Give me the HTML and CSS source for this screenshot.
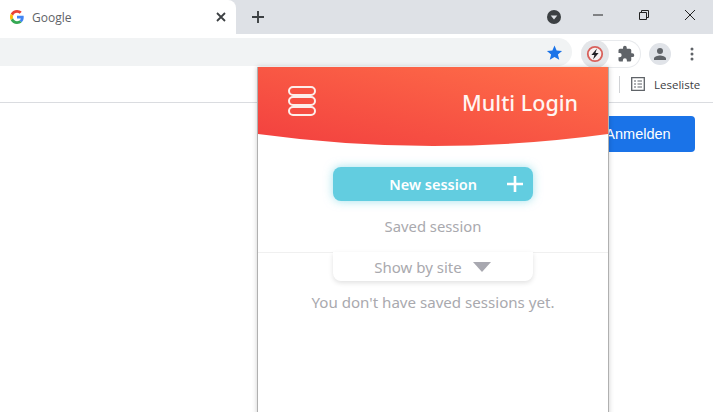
FILE: index.html
```html
<!DOCTYPE html>
<html lang="en">
<head>
  <meta charset="UTF-8">
  <meta name="viewport" content="width=device-width, initial-scale=1.0">
  <title>Multi Login</title>
  <link rel="stylesheet" href="styles.css">
</head>
<body>

  <div class="browser">
    <!-- Tab strip -->
    <div class="tabstrip">
      <div class="tab">
        <svg class="favicon" viewBox="0 0 48 48" width="14" height="14">
          <path fill="#ea4335" d="M24 9.5c3.5 0 6.700 1.200 9.200 3.600l6.900-6.900C35.900 2.400 30.500 0 24 0 14.600 0 6.500 5.400 2.600 13.200l8 6.200C12.500 13.700 17.800 9.500 24 9.500z"/>
          <path fill="#4285f4" d="M47 24.500c0-1.600-.1-3.100-.4-4.500H24v9h13c-.6 3-2.200 5.400-4.800 7.100l7.700 6c4.500-4.200 7.100-10.300 7.100-17.600z"/>
          <path fill="#fbbc05" d="M10.600 28.600c-.5-1.400-.8-3-.8-4.600s.3-3.200.8-4.600l-8-6.200C.9 16.500 0 20.100 0 24s.9 7.500 2.600 10.800l8-6.200z"/>
          <path fill="#34a853" d="M24 48c6.500 0 11.900-2.100 15.900-5.900l-7.700-6c-2.200 1.500-4.900 2.300-8.200 2.300-6.200 0-11.500-4.200-13.400-9.800l-8 6.200C6.500 42.600 14.600 48 24 48z"/>
        </svg>
        <span class="tab-title">Google</span>
        <svg class="tab-close" viewBox="0 0 10 10" width="10" height="10">
          <path d="M1 1l8 8M9 1L1 9" stroke="#3c4043" stroke-width="1.800" fill="none"/>
        </svg>
      </div>
      <svg class="new-tab" viewBox="0 0 12 12" width="12" height="12">
        <path d="M6 0v12M0 6h12" stroke="#3c4043" stroke-width="1.900" fill="none"/>
      </svg>
      <div class="window-controls">
        <svg class="profile-drop" viewBox="0 0 14 14" width="14" height="14">
          <circle cx="7" cy="7" r="7" fill="#3c4043"/>
          <path d="M3.700 5.400h6.600L7 9.600z" fill="#dee1e6"/>
        </svg>
        <div class="window-btn">
          <svg viewBox="0 0 10 10" width="10" height="10"><path d="M0 5h10" stroke="#222" fill="none"/></svg>
        </div>
        <div class="window-btn">
          <svg viewBox="0 0 10 10" width="10" height="10"><path d="M.5 2.500h7v7h-7zM2.500 2.500v-2h7v7h-2" stroke="#222" fill="none"/></svg>
        </div>
        <div class="window-btn">
          <svg viewBox="0 0 10 10" width="10" height="10"><path d="M0 0l10 10M10 0L0 10" stroke="#222" fill="none"/></svg>
        </div>
      </div>
    </div>

    <!-- Address bar -->
    <div class="toolbar">
      <div class="omnibox">
        <svg viewBox="0 0 24 24" width="17" height="17">
          <path fill="#1a73e8" d="M12 2l3 7.200 7.700.6-5.900 5 1.900 7.600L12 18.300l-6.700 4.100 1.900-7.600-5.900-5L9 9.200z"/>
        </svg>
      </div>
      <div class="extensions">
        <div class="ext-active">
          <svg viewBox="0 0 18 18" width="18" height="18">
            <circle cx="9" cy="9" r="7.200" fill="#f6f1f0" stroke="#d9605a" stroke-width="1.800"/>
            <path d="M10.900 3.500L5.400 10h3l-1.300 4.500L12.600 8H9.500z" fill="#202124"/>
          </svg>
        </div>
        <svg class="puzzle" viewBox="0 0 24 24" width="18" height="18">
          <path fill="#5f6368" d="M20.500 11H19V7a2 2 0 0 0-2-2h-4V3.500a2.500 2.500 0 0 0-5 0V5H4a2 2 0 0 0-2 2v3.800h1.500a2.700 2.700 0 0 1 0 5.400H2V20a2 2 0 0 0 2 2h3.800v-1.500a2.700 2.700 0 0 1 5.400 0V22H17a2 2 0 0 0 2-2v-4h1.500a2.500 2.500 0 0 0 0-5z"/>
        </svg>
      </div>
      <div class="avatar">
        <svg viewBox="0 0 24 24" width="18" height="18">
          <path fill="#5f6368" d="M12 12a4 4 0 1 0 0-8 4 4 0 0 0 0 8zm0 2c-2.700 0-8 1.300-8 4v2h16v-2c0-2.700-5.300-4-8-4z"/>
        </svg>
      </div>
      <svg class="kebab" viewBox="0 0 4 14" width="4" height="14">
        <circle cx="2" cy="2" r="1.500" fill="#5f6368"/>
        <circle cx="2" cy="7" r="1.500" fill="#5f6368"/>
        <circle cx="2" cy="12" r="1.500" fill="#5f6368"/>
      </svg>
    </div>

    <!-- Bookmarks -->
    <div class="bookmarks">
      <span class="bookmarks-sep"></span>
      <svg viewBox="0 0 14 14" width="14" height="14">
        <path d="M.7.700h12.600v12.600H.7z" stroke="#5f6368" stroke-width="1.300" fill="none"/>
        <path d="M3 4h2M3 7h2M3 10h2M6.500 4H11M6.500 7H11M6.500 10H11" stroke="#5f6368" stroke-width="1.200" fill="none"/>
      </svg>
      <span class="bookmarks-label">Leseliste</span>
    </div>

    <div class="content">
      <button class="signin-btn">Anmelden</button>
    </div>

    <!-- Extension popup -->
    <div class="popup">
      <div class="popup-header">
        <div class="burger">
          <span></span>
          <span></span>
          <span></span>
        </div>
        <h1>Multi Login</h1>
      </div>
      <div class="popup-body">
        <button class="new-session">
          <span>New session</span>
          <svg viewBox="0 0 16 16" width="16" height="16">
            <path d="M8 0v16M0 8h16" stroke="#fff" stroke-width="2.600" fill="none"/>
          </svg>
        </button>
        <div class="saved-title">Saved session</div>
        <div class="divider">
          <div class="site-filter">
            <span>Show by site</span>
            <svg viewBox="0 0 20 11" width="20" height="11"><path d="M1 1h18l-9 10z" fill="#a8a8b0"/></svg>
          </div>
        </div>
        <p class="empty">You don't have saved sessions yet.</p>
      </div>
    </div>
  </div>

</body>
</html>
```
FILE: styles.css
```css
* {
  box-sizing: border-box;
}
html, body {
  margin: 0;
  padding: 0;
  background: white;
}
.browser {
  position: relative;
  width: 713px;
  height: 412px;
  overflow: hidden;
  font-family: 'Open Sans', sans-serif;
}

/* Tab strip */
.tabstrip {
  height: 34px;
  background: #dee1e6;
  display: flex;
  align-items: flex-start;
}
.tab {
  width: 236px;
  height: 34px;
  background: white;
  border-top-right-radius: 8px;
  display: flex;
  align-items: center;
  padding: 0 10px 0 10px;
}
.tab-title {
  flex: 1;
  margin-left: 8px;
  font-size: 12px;
  color: #5f6368;
}
.new-tab {
  margin: 11px 0 0 16px;
}
.window-controls {
  margin-left: auto;
  display: flex;
  align-items: center;
  height: 30px;
}
.profile-drop {
  margin-right: 14px;
  margin-top: 4px;
}
.window-btn {
  width: 46px;
  height: 28px;
  display: flex;
  align-items: center;
  justify-content: center;
}

/* Toolbar */
.toolbar {
  height: 32px;
  background: white;
  display: flex;
  align-items: flex-end;
  padding-right: 19px;
  position: relative;
}
.omnibox {
  width: 572px;
  height: 28px;
  background: #f1f3f4;
  border-radius: 0 14px 14px 0;
  display: flex;
  align-items: center;
  justify-content: flex-end;
  padding-right: 9px;
}
.extensions {
  margin: 0 0 -2px 9px;
  width: 60px;
  height: 28px;
  border: 1px solid #e8eaed;
  border-left: none;
  border-radius: 14px;
  display: flex;
  align-items: center;
  align-self: flex-end;
}
.ext-active {
  width: 28px;
  height: 28px;
  margin-top: -1px;
  margin-bottom: -1px;
  border-radius: 50%;
  background: #e4e6e9;
  display: flex;
  align-items: center;
  justify-content: center;
}
.puzzle {
  margin-left: 8px;
}
.avatar {
  width: 22px;
  height: 22px;
  margin: 0 0 1px 8px;
  border-radius: 50%;
  background: #e0e3e8;
  display: flex;
  align-items: center;
  justify-content: center;
}
.kebab {
  margin: 0 0 5px 19px;
}

/* Bookmarks bar */
.bookmarks {
  height: 37px;
  border-bottom: 1px solid #dadce0;
  display: flex;
  align-items: center;
  justify-content: flex-end;
  padding-right: 14px;
}
.bookmarks-sep {
  width: 1px;
  height: 17px;
  background: #d0d2d5;
  margin-right: 11px;
}
.bookmarks-label {
  margin-left: 9px;
  font-size: 11.500px;
  color: #3c4043;
  width: 45px;
}

/* Page behind the popup */
.content {
  display: flex;
  justify-content: flex-end;
  padding: 13px 18px 0 0;
}
.signin-btn {
  width: 120px;
  height: 36px;
  padding: 0 0 0 6px;
  border: none;
  border-radius: 4px;
  background: #1a73e8;
  color: white;
  font-family: 'Liberation Sans', Arial, sans-serif;
  font-size: 14.500px;
}

/* Popup */
.popup {
  position: absolute;
  left: 257px;
  top: 67px;
  width: 352px;
  height: 360px;
  background: white;
  border: 1px solid #b0b0b0;
  border-top: none;
  box-shadow: 0 0 5px rgba(0,0,0,0.2);
}
.popup-header {
  height: 80px;
  padding: 0 30px;
  background: linear-gradient(to top right, #f23f3f, #ff7049);
  clip-path: path('M0 0H350V67Q175 91 0 67Z');
  display: flex;
  justify-content: space-between;
  color: white;
}
.popup-header h1 {
  margin: 20px 0 0;
  font-family: 'Noto Sans', sans-serif;
  font-size: 21.500px;
  font-weight: 500;
  line-height: 32px;
  color: #fff5f2;
}
.burger {
  margin-top: 19px;
  display: flex;
  flex-direction: column;
  gap: 0;
}
.burger span {
  display: block;
  width: 28px;
  height: 10px;
  border: 2.500px solid #fdeeea;
  border-radius: 5px;
}
.popup-body {
  display: flex;
  flex-direction: column;
  align-items: center;
  padding-top: 20px;
  font-family: 'Noto Sans', sans-serif;
  color: #a9a9ae;
}
.new-session {
  width: 200px;
  height: 34px;
  border: none;
  border-radius: 8px;
  background: #62cde0;
  box-shadow: 0 0 10px rgba(98,205,224,0.6);
  color: white;
  font-family: 'Noto Sans', sans-serif;
  font-size: 14.500px;
  font-weight: 600;
  display: flex;
  align-items: center;
  justify-content: flex-end;
  padding: 0 10px 0 0;
}
.new-session span {
  margin-right: 30px;
}
.saved-title {
  margin-top: 15px;
  font-size: 14.800px;
  line-height: 20px;
}
.divider {
  width: 100%;
  margin-top: 16px;
  border-top: 1px solid #f0f0f0;
  display: flex;
  justify-content: center;
}
.site-filter {
  width: 200px;
  height: 29px;
  margin-top: -1px;
  background: white;
  border-radius: 0 0 8px 8px;
  box-shadow: 0 2px 5px rgba(0,0,0,0.12);
  display: flex;
  align-items: center;
  justify-content: center;
  gap: 10px;
  font-size: 15px;
}
.empty {
  margin: 11px 0 0;
  font-size: 15.100px;
  line-height: 20px;
}
```
